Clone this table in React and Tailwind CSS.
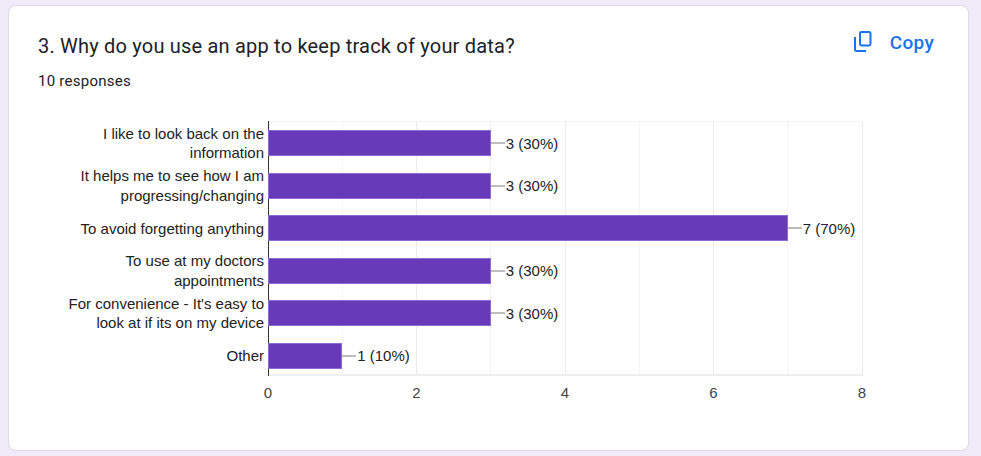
import React from "react";

const data = [
  { label: ["I like to look back on the", "information"], value: 3, text: "3 (30%)" },
  { label: ["It helps me to see how I am", "progressing/changing"], value: 3, text: "3 (30%)" },
  { label: ["To avoid forgetting anything"], value: 7, text: "7 (70%)" },
  { label: ["To use at my doctors", "appointments"], value: 3, text: "3 (30%)" },
  { label: ["For convenience - It's easy to", "look at if its on my device"], value: 3, text: "3 (30%)" },
  { label: ["Other"], value: 1, text: "1 (10%)" },
];

const UNIT = 74.25;

function CopyIcon() {
  return (
    <svg width="24" height="24" viewBox="0 0 24 24" fill="none" className="block">
      <rect x="10" y="3" width="10.5" height="13.5" rx="1.4" stroke="#1a73e8" strokeWidth="2" />
      <path d="M5 8 V20.6 a1.4 1.4 0 0 0 1.4 1.4 H16" stroke="#1a73e8" strokeWidth="2" />
    </svg>
  );
}

export default function App() {
  const grid = [1, 2, 3, 4, 5, 6, 7, 8];
  return (
    <div className="w-[981px] h-[456px] bg-[#efebf8] pt-[5px] pl-[8px]">
      <div className="w-[961px] h-[446px] rounded-[8px] border border-[#dadce0] bg-white">
        <div className="flex justify-between pl-[29px] pr-[34px] pt-[23px]">
          <div className="mt-[4px] font-['Roboto',sans-serif] text-[#202124]">
            <div className="text-[20px] leading-[26px] tracking-[0.2px]">
              3. Why do you use an app to keep track of your data?
            </div>
            <div className="mt-[12px] text-[15px] leading-[20px] tracking-[0.25px]">10 responses</div>
          </div>
          <div className="flex items-start">
            <CopyIcon />
            <div className="ml-[16px] mt-[2px] font-['Roboto',sans-serif] font-medium text-[19px] leading-[24px] tracking-[0.3px] text-[#1a73e8]">
              Copy
            </div>
          </div>
        </div>

        <div className="mt-[30px] flex font-['Liberation_Sans',Arial,sans-serif] text-[15px] text-[#222222]">
          <div className="w-[259px] flex flex-col pr-[4px] pt-[1px]">
            {data.map((d, i) => (
              <div key={i} className="h-[42.5px] flex flex-col items-end justify-center text-right leading-[19.5px]">
                {d.label.map((l, j) => (
                  <div key={j} className="whitespace-nowrap">{l}</div>
                ))}
              </div>
            ))}
          </div>
          <div className="flex flex-col">
            <div className="relative w-[594px] h-[255px] border-t border-[#f2f2f2]">
              {grid.map((g) => (
                <div
                  key={g}
                  className={
                    g % 2 === 0
                      ? "absolute top-0 bottom-0 w-px bg-[#ebebeb]"
                      : "absolute top-0 bottom-0 w-px bg-[#f4f4f4]"
                  }
                  style={{ left: g * UNIT - 0.5 }}
                />
              ))}
              <div className="absolute left-0 right-0 bottom-0 h-[2px] bg-[#eeeeee]" />
              <div className="absolute left-0 top-[-1px] bottom-0 w-px bg-[#333333]" />
              <div className="relative flex flex-col">
                {data.map((d, i) => (
                  <div key={i} className="h-[42.5px] flex items-center">
                    <div
                      className="h-[26px] bg-[#673ab7] border border-[#8e6bd0]"
                      style={{ width: d.value * UNIT }}
                    />
                    <div className="w-[14px] h-[2px] bg-[#bdbdbd]" />
                    <div className="ml-[1px] whitespace-nowrap leading-[16px] pt-[1px]">{d.text}</div>
                  </div>
                ))}
              </div>
            </div>
            <div className="mt-[9px] w-[594px] flex justify-between text-[#444444] leading-[16px]">
              {[0, 2, 4, 6, 8].map((n) => (
                <div key={n} className="w-0 flex justify-center">
                  <span>{n}</span>
                </div>
              ))}
            </div>
          </div>
        </div>
      </div>
    </div>
  );
}
